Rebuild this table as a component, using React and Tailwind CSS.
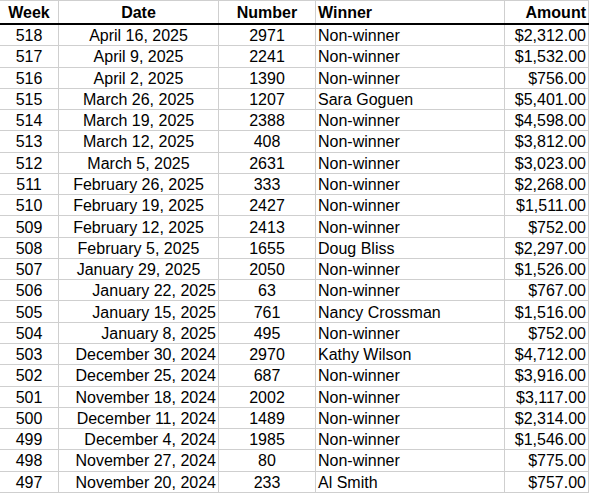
import React from "react";

const rows = [
  ["518", "April 16, 2025", "2971", "Non-winner", "$2,312.00", "c"],
  ["517", "April 9, 2025", "2241", "Non-winner", "$1,532.00", "c"],
  ["516", "April 2, 2025", "1390", "Non-winner", "$756.00", "c"],
  ["515", "March 26, 2025", "1207", "Sara Goguen", "$5,401.00", "c"],
  ["514", "March 19, 2025", "2388", "Non-winner", "$4,598.00", "c"],
  ["513", "March 12, 2025", "408", "Non-winner", "$3,812.00", "c"],
  ["512", "March 5, 2025", "2631", "Non-winner", "$3,023.00", "c"],
  ["511", "February 26, 2025", "333", "Non-winner", "$2,268.00", "c"],
  ["510", "February 19, 2025", "2427", "Non-winner", "$1,511.00", "c"],
  ["509", "February 12, 2025", "2413", "Non-winner", "$752.00", "c"],
  ["508", "February 5, 2025", "1655", "Doug Bliss", "$2,297.00", "c"],
  ["507", "January 29, 2025", "2050", "Non-winner", "$1,526.00", "c"],
  ["506", "January 22, 2025", "63", "Non-winner", "$767.00", "r"],
  ["505", "January 15, 2025", "761", "Nancy Crossman", "$1,516.00", "r"],
  ["504", "January 8, 2025", "495", "Non-winner", "$752.00", "r"],
  ["503", "December 30, 2024", "2970", "Kathy Wilson", "$4,712.00", "r"],
  ["502", "December 25, 2024", "687", "Non-winner", "$3,916.00", "r"],
  ["501", "November 18, 2024", "2002", "Non-winner", "$3,117.00", "r"],
  ["500", "December 11, 2024", "1489", "Non-winner", "$2,314.00", "r"],
  ["499", "December 4, 2024", "1985", "Non-winner", "$1,546.00", "r"],
  ["498", "November 27, 2024", "80", "Non-winner", "$775.00", "r"],
  ["497", "November 20, 2024", "233", "Al Smith", "$757.00", "r"],
];

const cell = "border-r border-[#cfcfcf] flex items-center pt-[2px] overflow-hidden whitespace-nowrap";

export default function App() {
  return (
    <div
      className="w-[592px] h-[495px] bg-white text-black overflow-hidden text-[16px] leading-none"
      style={{ fontFamily: '"Liberation Sans", Arial, sans-serif' }}
    >
      <div className="w-[589px] border-t border-[#cfcfcf]">
        <div className="flex h-[24px] border-b-2 border-black font-bold">
          <div className={`${cell} w-[59px] justify-center`}>Week</div>
          <div className={`${cell} w-[160px] justify-center`}>Date</div>
          <div className={`${cell} w-[97px] justify-center`}>Number</div>
          <div className={`${cell} w-[189px] pl-[2px]`}>Winner</div>
          <div className={`${cell} w-[84px] justify-end pr-[2px]`}>Amount</div>
        </div>
        {rows.map((r) => (
          <div key={r[0]} className="flex h-[21.27px] border-b border-[#cfcfcf]">
            <div className={`${cell} w-[59px] justify-center`}>{r[0]}</div>
            <div
              className={`${cell} w-[160px] ${r[5] === "c" ? "justify-center" : "justify-end pr-[2px]"}`}
            >
              {r[1]}
            </div>
            <div className={`${cell} w-[97px] justify-center`}>{r[2]}</div>
            <div className={`${cell} w-[189px] pl-[2px]`}>{r[3]}</div>
            <div className={`${cell} w-[84px] justify-end pr-[2px]`}>{r[4]}</div>
          </div>
        ))}
      </div>
    </div>
  );
}
